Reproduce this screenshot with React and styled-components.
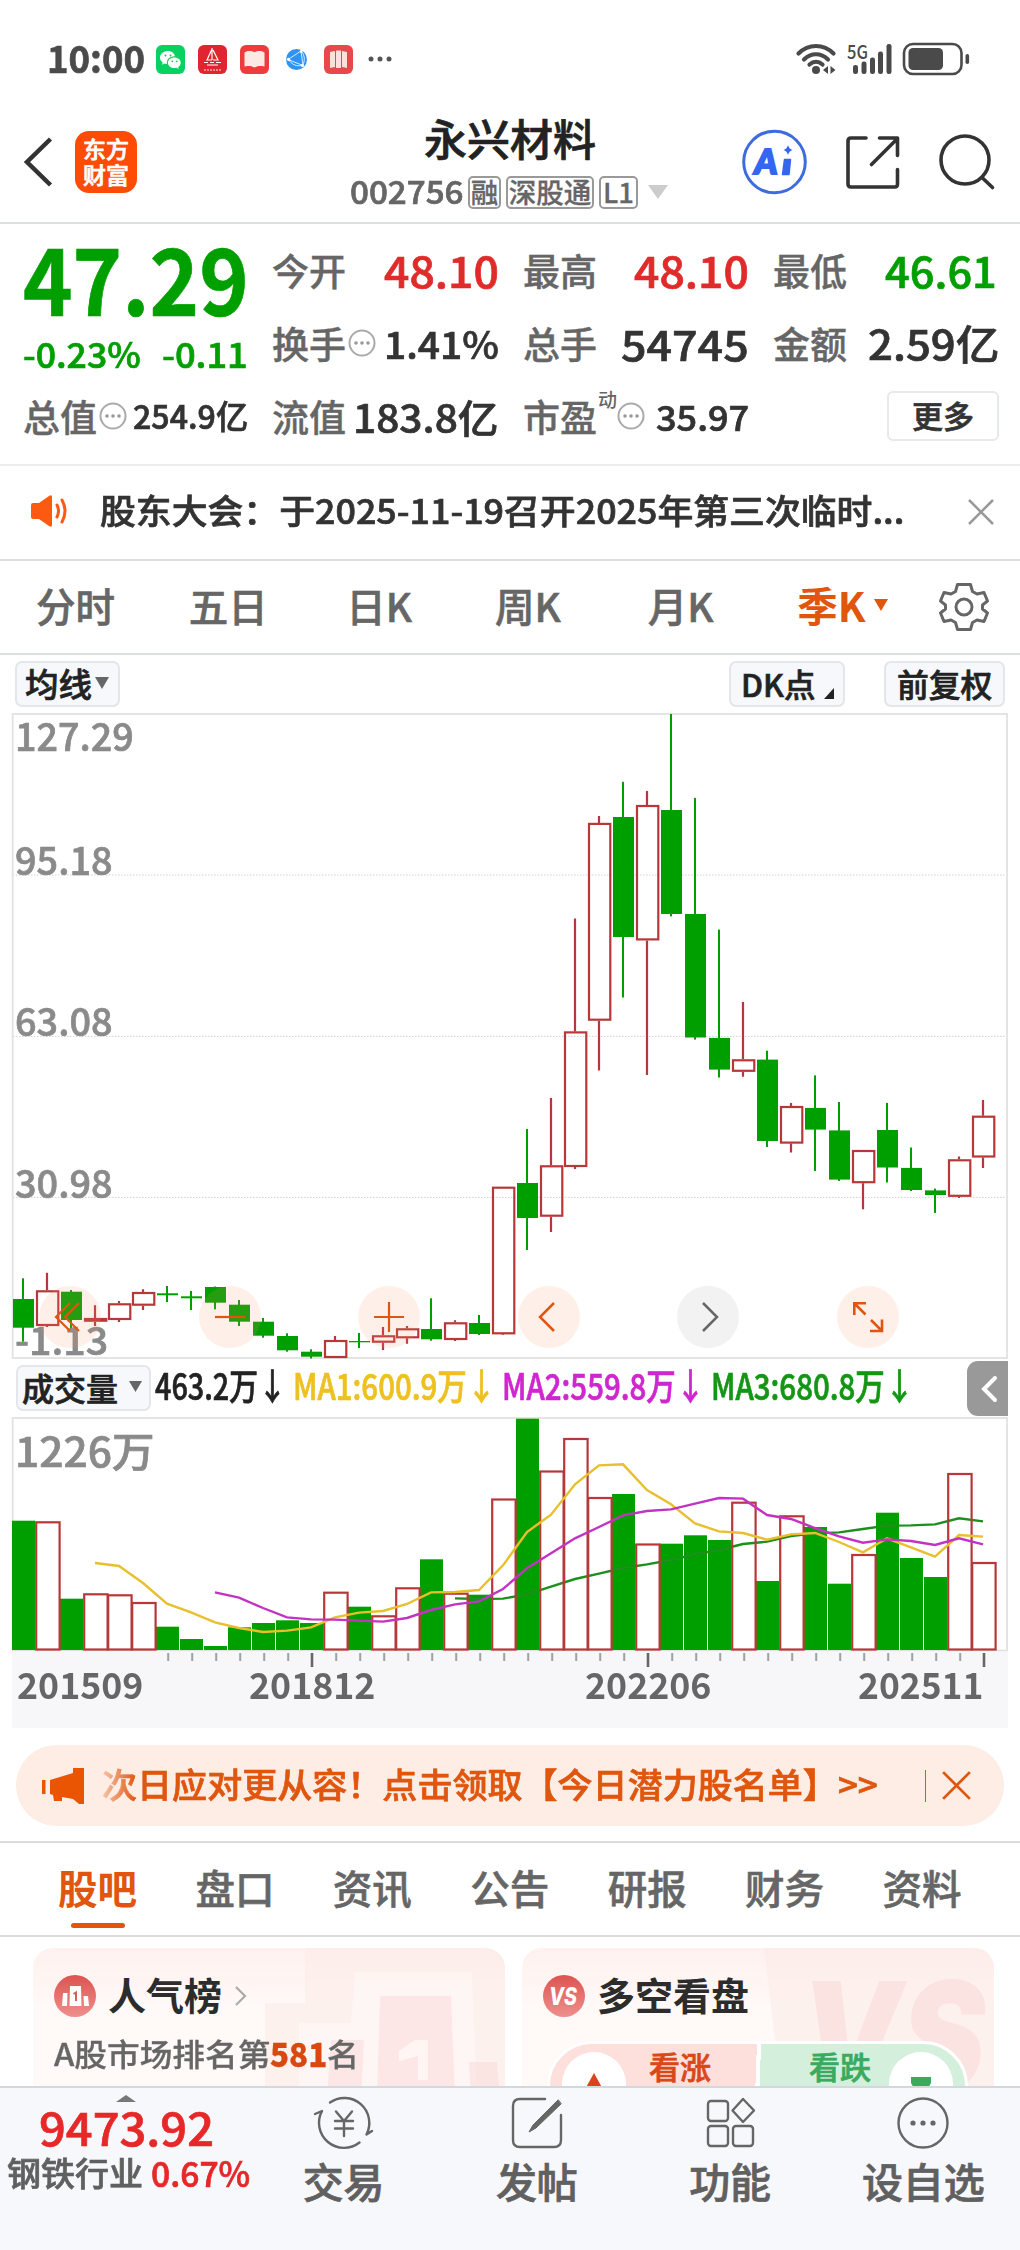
import React, { useLayoutEffect, useRef, useState } from "react";
import styled, { createGlobalStyle } from "styled-components";

const GREEN = "#009f00";
const RED = "#b8383a";
const ORANGE = "#e0560e";

const Global = createGlobalStyle`
  * { box-sizing: border-box; }
  body { margin: 0; background: #fff; }
  #root {
    font-family: "Noto Sans CJK SC", "Noto Sans", sans-serif;
    font-weight: 500;
    color: #333;
    -webkit-text-stroke: .7px currentColor;
  }
  svg { display: block; flex: none; overflow: visible; }
  svg text { -webkit-text-stroke: 0; }
`;

/* ---------- text that is stretched to a given width ---------- */
const FitBox = styled.span`
  display: block;
  flex: none;
  width: ${(p) => p.$w}px;
  height: ${(p) => p.$h || p.$s * 1.2}px;
  line-height: ${(p) => p.$h || p.$s * 1.2}px;
  font-size: ${(p) => p.$s}px;
  color: ${(p) => p.$c || "inherit"};
  font-weight: ${(p) => p.$b || "inherit"};
  white-space: nowrap;
  margin: ${(p) => p.$m || 0};
`;
const FitInner = styled.span`
  display: inline-block;
  transform-origin: 0 50%;
`;
function Fit({ w, s, h, c, b, m, children }) {
  const ref = useRef(null);
  const [k, setK] = useState(1);
  useLayoutEffect(() => {
    const n = ref.current.offsetWidth;
    if (n) setK(w / n);
  }, [w, children]);
  return (
    <FitBox $w={w} $s={s} $h={h} $c={c} $b={b} $m={m}>
      <FitInner ref={ref} style={{ transform: `scaleX(${k})` }}>{children}</FitInner>
    </FitBox>
  );
}

const Screen = styled.div`
  width: 1020px;
  height: 2250px;
  overflow: hidden;
  display: flex;
  flex-direction: column;
  background: #fff;
`;

/* ---------- status bar ---------- */
const StatusBar = styled.div`
  height: 90px;
  flex: none;
  padding: 28px 50px 0 47px;
  display: flex;
  justify-content: space-between;
`;
const StatusSide = styled.div`
  display: flex;
  align-items: center;
  height: 62px;
`;
const AppIcons = styled.div`
  display: flex;
  gap: 13px;
  margin-left: 11px;
  align-items: center;
`;

/* ---------- header ---------- */
const Header = styled.header`
  height: 134px;
  flex: none;
  border-bottom: 2px solid #dcdfe0;
  display: grid;
  grid-template-columns: 350px 320px 350px;
`;
const HeaderLeft = styled.div`
  display: flex;
  align-items: center;
  padding: 12px 0 0 23px;
  gap: 22px;
`;
const Logo = styled.div`
  width: 62px;
  height: 62px;
  border-radius: 14px;
  background: #fe4b06;
  color: #fff;
  display: flex;
  flex-direction: column;
  justify-content: center;
  align-items: center;
  font-size: 23px;
  line-height: 26px;
  padding-bottom: 3px;
  font-weight: 500;
`;
const HeaderMid = styled.div`
  display: flex;
  flex-direction: column;
`;
const Title = styled.div`
  font-size: 43px;
  line-height: 50px;
  margin-top: 22px;
  padding-left: 74px;
  font-weight: 500;
  color: #222;
`;
const CodeRow = styled.div`
  display: flex;
  align-items: center;
  height: 34px;
  margin-top: 13px;
  color: #666;
`;
const Tag = styled.span`
  width: ${(p) => p.$w}px;
  height: 33px;
  margin-left: 5px;
  border: 2px solid #999;
  border-radius: 5px;
  display: flex;
  align-items: center;
  justify-content: center;
  font-size: 27.5px;
  line-height: 28px;
  padding-bottom: 3px;
  white-space: nowrap;
  -webkit-text-stroke: .3px currentColor;
`;
const HeaderRight = styled.div`
  display: flex;
  align-items: center;
  padding: 12px 0 0 72px;
`;

/* ---------- quote ---------- */
const Quote = styled.section`
  height: 242px;
  flex: none;
  border-bottom: 2px solid #eceeee;
  padding: 10px 22px 0 23px;
  display: grid;
  grid-template-columns: 225px 227px 226px 226px;
  column-gap: 24px;
  grid-template-rows: 72px 74px 72px;
`;
const Price = styled.div`
  grid-row: span 2;
  display: flex;
  flex-direction: column;
`;
const Changes = styled.div`
  display: flex;
  justify-content: space-between;
  margin-top: 14px;
`;
const Cell = styled.div`
  display: flex;
  align-items: center;
  justify-content: space-between;
  padding-right: ${(p) => p.$r || 0}px;
`;
const Label = styled.span`
  display: flex;
  align-items: center;
  gap: 2px;
  font-size: 37px;
  line-height: 44px;
  color: #666;
  white-space: nowrap;
  -webkit-text-stroke: .4px currentColor;
`;
const Sup = styled.sup`
  font-size: 19px;
  line-height: 20px;
  align-self: flex-start;
  margin: -5px -2px 0 -1px;
  -webkit-text-stroke: 0;
`;
const MoreButton = styled.button`
  width: 112px;
  height: 50px;
  margin-left: auto;
  padding: 0 0 3px;
  background: #fff;
  border: 2px solid #e6e9ea;
  border-radius: 6px;
  font: inherit;
  font-size: 31px;
  line-height: 44px;
  color: #333;
`;

/* ---------- notice ---------- */
const Notice = styled.section`
  height: 95px;
  flex: none;
  border-bottom: 2px solid #dcdfe0;
  padding: 0 26px 2px 29px;
  display: flex;
  align-items: center;
  justify-content: space-between;
`;
const NoticeText = styled.div`
  display: flex;
  align-items: center;
  gap: 29px;
`;

/* ---------- period tabs ---------- */
const Periods = styled.nav`
  height: 94px;
  flex: none;
  border-bottom: 2px solid #dcdfe0;
  padding: 0 31px 0 36px;
  display: flex;
  align-items: center;
  color: #666;
`;
const Period = styled.span`
  width: ${(p) => p.$w}px;
  display: flex;
  align-items: center;
  gap: 8px;
  font-size: ${(p) => (p.$on ? 40.5 : 39.5)}px;
  line-height: 46px;
  padding-bottom: 4px;
  color: ${(p) => (p.$on ? ORANGE : "inherit")};
  font-weight: ${(p) => (p.$on ? 700 : 500)};
  -webkit-text-stroke: ${(p) => (p.$on ? 0 : 0.6)}px currentColor;
`;

/* ---------- chart ---------- */
const ToolRow = styled.div`
  height: 58px;
  flex: none;
  padding: 6px 15px 0 15px;
  display: flex;
  gap: 39px;
`;
const Chip = styled.button`
  width: ${(p) => p.$w}px;
  height: 46px;
  padding: 0 0 3px ${(p) => p.$l}px;
  background: #f7f8fb;
  border: 2px solid #e3e6ea;
  border-radius: 7px;
  display: flex;
  align-items: center;
  font: inherit;
  font-size: ${(p) => p.$s}px;
  line-height: 40px;
  color: #222;
  margin-right: ${(p) => (p.$push ? "auto" : 0)};
  white-space: nowrap;
  flex: none;
`;
const Plot = styled.div`
  flex: none;
  position: relative;
  height: ${(p) => p.$h}px;
`;
const AxisLabels = styled.div`
  position: absolute;
  left: 15px;
  top: 0;
  height: 100%;
  color: #8a8a8a;
`;
const AxisLabel = styled.div`
  position: absolute;
  top: ${(p) => p.$y}px;
`;
const Controls = styled.div`
  position: absolute;
  left: 39px;
  bottom: 11px;
  display: flex;
  gap: 97.6px;
`;
const Round = styled.button`
  width: 62px;
  height: 62px;
  border: 0;
  padding: 0;
  border-radius: 50%;
  background: ${(p) => (p.$gray ? "rgba(200,200,200,.23)" : "rgba(255,150,110,.15)")};
  display: flex;
  align-items: center;
  justify-content: center;
`;
const VolHead = styled.div`
  height: 58px;
  flex: none;
  padding: 6px 12px 0 16px;
  display: flex;
  align-items: flex-start;
`;
const Collapse = styled.button`
  width: 41px;
  height: 55px;
  border: 0;
  margin: -4px 0 0 auto;
  padding: 0 0 0 2px;
  border-radius: 11px 0 0 11px;
  background: #999;
  display: flex;
  align-items: center;
  justify-content: center;
`;
const Axis = styled.div`
  height: 76px;
  flex: none;
  margin: 0 12px;
  background: #f7f7fa;
`;
const Dates = styled.div`
  display: flex;
  padding-left: 5px;
  color: #666;
  -webkit-text-stroke: 0;
`;

/* ---------- banner ---------- */
const Banner = styled.div`
  height: 81px;
  flex: none;
  margin: 17px 16px 15px;
  border-radius: 41px;
  background: #fdede4;
  display: flex;
  align-items: center;
  padding: 0 33px 0 26px;
`;
const BannerText = styled.div`
  margin-left: 18px;
  -webkit-mask-image: linear-gradient(90deg, rgba(0,0,0,.25), #000 34px);
  mask-image: linear-gradient(90deg, rgba(0,0,0,.25), #000 34px);
`;
const Bar = styled.i`
  width: 1px;
  height: 32px;
  background: ${ORANGE};
  margin: 0 16px 0 auto;
`;

/* ---------- content tabs ---------- */
const Tabs = styled.nav`
  height: 96px;
  flex: none;
  border-top: 2px solid #dcdcdc;
  border-bottom: 2px solid #d9dddd;
  padding: 16px 0 0 58px;
  display: flex;
`;
const Tab = styled.div`
  width: 137.6px;
  font-size: 39.5px;
  line-height: 56px;
  color: ${(p) => (p.$on ? ORANGE : "#666")};
  font-weight: ${(p) => (p.$on ? 700 : 500)};
  -webkit-text-stroke: ${(p) => (p.$on ? 0 : 0.6)}px currentColor;
  &::after {
    content: "";
    display: block;
    width: 54px;
    height: 5px;
    margin: 8px 0 0 13px;
    border-radius: 3px;
    background: ${(p) => (p.$on ? ORANGE : "transparent")};
  }
`;

/* ---------- cards ---------- */
const Cards = styled.section`
  height: 149px;
  flex: none;
  overflow: hidden;
  padding: 11px 26px 0 33px;
  display: flex;
  gap: 17px;
`;
const Card = styled.article`
  width: 472px;
  height: 220px;
  flex: none;
  border-radius: 20px;
  background: linear-gradient(#fef1ef, #fff9f7 60px);
  position: relative;
  overflow: hidden;
  padding: 27px 0 0 21px;
`;
const CardArt = styled.div`
  position: absolute;
  right: 0;
  top: 0;
`;
const CardHead = styled.div`
  position: relative;
  display: flex;
  align-items: center;
  height: 42px;
  font-size: 38px;
  line-height: 42px;
  font-weight: 700;
  color: #2c2c2c;
  gap: 12px;
  -webkit-text-stroke: 0;
  & > span { margin-top: -5px; }
`;
const Rank = styled.p`
  position: relative;
  margin: 17px 0 0;
  display: flex;
  color: #666;
  -webkit-text-stroke: .3px currentColor;
`;
const Vote = styled.div`
  position: relative;
  display: flex;
  width: 421px;
  height: 90px;
  margin: 24px 0 0 4px;
  border: 3px solid #fff;
  border-radius: 45px;
  overflow: hidden;
  background: linear-gradient(92deg, #fddfdb 0 49.5%, #fff 49.5% 50.5%, #d5efdd 50.5%);
  justify-content: space-between;
  padding: 8px 12px;
  font-size: 31px;
  line-height: 36px;
`;
const VoteSide = styled.div`
  display: flex;
  gap: ${(p) => p.$g}px;
  color: ${(p) => p.$c};
  & > span { margin-top: -4px; }
`;
const Disc = styled.i`
  width: 64px;
  height: 64px;
  border-radius: 50%;
  background: #fff;
  display: flex;
  justify-content: center;
  padding-top: 21px;
`;

/* ---------- bottom bar ---------- */
const Bottom = styled.footer`
  flex: 1;
  border-top: 2px solid #d3d8da;
  background: #f7f8fb;
  display: flex;
`;
const Index = styled.div`
  width: 247px;
  display: flex;
  flex-direction: column;
  align-items: center;
  padding: 7px 0 0 5px;
`;
const IndexRow = styled.div`
  display: flex;
  gap: 8px;
  margin-left: 4px;
`;
const Action = styled.div`
  width: 193.3px;
  display: flex;
  flex-direction: column;
  align-items: center;
  padding-top: 8px;
  font-size: 41px;
  line-height: 50px;
  color: #606060;
  & > span { margin-top: 5px; }
`;

const Tri = ({ w, h, c, up }) => (
  <svg width={w} height={h}><path d={up ? `M0 ${h}H${w}L${w / 2} 0z` : `M0 0H${w}L${w / 2} ${h}z`} fill={c} /></svg>
);
const Cross = ({ s, c, w = 2.5 }) => (
  <svg width={s} height={s} viewBox="0 0 26 26"><path d="M1 1L25 25M25 1L1 25" stroke={c} strokeWidth={w} /></svg>
);
const Info = () => (
  <svg width="28" height="28" viewBox="0 0 28 28">
    <circle cx="14" cy="14" r="12.5" fill="none" stroke="#aaa" strokeWidth="2" />
    <circle cx="8" cy="14" r="1.8" fill="#999" /><circle cx="14" cy="14" r="1.8" fill="#999" /><circle cx="20" cy="14" r="1.8" fill="#999" />
  </svg>
);

/* candles: [direction, body top, body bottom, high, low] */
const candles = [
  ["g", 1299, 1327.7, 1278.3, 1341.7], ["r", 1290.3, 1326, 1272.7, 1327], ["g", 1291.7, 1320, 1290, 1330.7],
  ["r", 1318, 1321.7, 1305.3, 1326], ["r", 1303.3, 1320, 1301, 1322], ["r", 1292, 1305.7, 1289.3, 1310],
  ["g", 1293.3, 1295.3, 1286, 1302], ["g", 1296.3, 1298.3, 1291, 1310], ["g", 1287, 1302.7, 1286.5, 1309.3],
  ["g", 1304.7, 1321.7, 1300, 1326], ["g", 1321.7, 1335.7, 1318, 1337.7], ["g", 1336, 1350.3, 1333.3, 1351.7],
  ["g", 1351.7, 1356.7, 1349.3, 1358.5], ["r", 1340, 1358, 1336, 1358], ["g", 1341, 1342.3, 1333, 1348],
  ["r", 1335.3, 1342.7, 1327, 1350], ["r", 1328.3, 1338.3, 1326, 1343.7], ["g", 1329, 1339.3, 1298.3, 1340.7],
  ["r", 1322.3, 1340, 1320.3, 1341], ["g", 1323, 1334, 1315, 1335], ["r", 1186.7, 1334.3, 1186.7, 1335],
  ["g", 1183, 1218, 1129, 1250], ["r", 1165.3, 1216.7, 1098, 1232], ["r", 1031.4, 1167, 918.6, 1169],
  ["r", 822.9, 1020.7, 816, 1070.4], ["g", 817, 937, 781.8, 997.5], ["r", 805, 940.4, 791, 1075],
  ["g", 810, 914, 714, 916.4], ["g", 914, 1037.5, 797.9, 1039.6], ["g", 1037.9, 1069.6, 929.6, 1077.5],
  ["r", 1059.3, 1071.8, 1002, 1076.8], ["g", 1059.6, 1141, 1050.7, 1147], ["r", 1106, 1143.6, 1102.9, 1152.5],
  ["g", 1107.9, 1129.6, 1075.4, 1171], ["g", 1130.4, 1179.6, 1102, 1181], ["r", 1150, 1183.2, 1150, 1209.3],
  ["g", 1130, 1167.5, 1102.9, 1182.5], ["g", 1167.9, 1190, 1147.5, 1191], ["g", 1190.4, 1195, 1188.6, 1212.9],
  ["r", 1159.3, 1196.8, 1156.4, 1198], ["r", 1115.7, 1157.5, 1100, 1167.9],
];
const volumeTops = [
  120.7, 121.3, 198.7, 193.3, 194.3, 202, 226.7, 239, 246, 227.3, 223, 220.3, 223, 191.7, 206.7, 215.3, 187.3, 159.3,
  192.7, 194.7, 98.5, 18.7, 70.5, 38, 97, 94, 143.5, 143.7, 135.3, 140, 101.7, 181, 115.3, 127, 183.7, 154, 112.7,
  158, 177, 73, 162,
];
const ma1 = [489, 498, 549, 611, 637, 667, 684, 696, 692, 682, 652, 638, 633, 612, 577, 576, 570, 496, 396, 344, 253,
  196, 193, 270, 313, 370, 394, 399, 419, 403, 399, 426, 457, 415, 442, 470, 405, 410];
const ma2 = [577, 593, 624, 652, 658, 659, 662, 665, 654, 630, 613, 604, 567, 505, 460, 415, 381, 346, 333, 328, 311,
  294, 296, 345, 357, 384, 409, 428, 418, 423, 435, 415, 433];
const ma3 = [595, 597, 596, 583, 560, 537, 521, 504, 493, 480, 463, 450, 432, 425, 408, 400, 397, 387, 377, 376, 373,
  355, 364];
const cx = (i) => 23 + 24 * i;
const line = (arr, from) => arr.map((v, k) => `${cx(from + k)},${v / 3}`).join(" ");

function CandleChart() {
  return (
    <svg width="1020" height="646" viewBox="0 713 1020 646">
      {[875, 1036.4, 1197.4].map((y) => (
        <path key={y} d={`M13 ${y}H1006`} stroke="#d2d2d2" strokeWidth="1" strokeDasharray="1.5 1.5" />
      ))}
      <rect x="12.7" y="714" width="994.3" height="644" fill="none" stroke="#e2e2e2" strokeWidth="1.8" />
      {candles.map(([d, t, b, h, l], i) => {
        const x = cx(i);
        return d === "g" ? (
          <g key={i} fill={GREEN}>
            <rect x={x - 1} y={h} width="2" height={l - h} />
            <rect x={x - 10} y={t} width="21" height={b - t} />
          </g>
        ) : (
          <g key={i} stroke={RED} strokeWidth="2.2" fill="none">
            <path d={`M${x} ${h}V${t}M${x} ${b}V${l}`} />
            <rect x={x - 10} y={t + 1} width="21.3" height={Math.max(b - t - 2, 1)} />
          </g>
        );
      })}
    </svg>
  );
}

function VolumeChart() {
  return (
    <svg width="1020" height="235" viewBox="0 17 1020 235">
      <rect x="12.7" y="18" width="994.3" height="232.5" fill="none" stroke="#e2e2e2" strokeWidth="1.8" />
      {volumeTops.map((t, i) =>
        candles[i][0] === "g" ? (
          <rect key={i} x={cx(i) - 11} y={t} width="23" height={250 - t} fill={GREEN} />
        ) : null
      )}
      <polyline points={line(ma3, 18)} fill="none" stroke="#1c8f1c" strokeWidth="2.4" />
      {volumeTops.map((t, i) =>
        candles[i][0] === "g" ? null : (
          <rect key={i} x={cx(i) - 10.8} y={t + 1} width="23.4" height={249 - t - 0.5} fill="none" stroke={RED} strokeWidth="2.2" />
        )
      )}
      <polyline points={line(ma1, 3)} fill="none" stroke="#e8c02c" strokeWidth="2.4" />
      <polyline points={line(ma2, 8)} fill="none" stroke="#c233c2" strokeWidth="2.4" />
    </svg>
  );
}

function Ticks() {
  return (
    <svg width="996" height="16" viewBox="0 -1 996 16">
      {candles.map((_, i) => {
        const big = i === 12 || i === 26 || i === 40;
        if (i < 6) return null;
        return <rect key={i} x={cx(i) - 11.8 + (big ? -0.5 : 0)} y="0" width={big ? 2.6 : 2} height={big ? 14 : 8} fill={big ? "#666" : "#a0a0a0"} />;
      })}
    </svg>
  );
}

const actionIcon = { fill: "none", stroke: "#666", strokeWidth: 2.4, strokeLinecap: "round", strokeLinejoin: "round" };

export default function App() {
  return (
    <Screen>
      <Global />
      <StatusBar>
        <StatusSide>
          <Fit w={98} s={38} b={700} c="#4a4a4a" m="-4px 0 0">10:00</Fit>
          <AppIcons>
            <svg width="29" height="29" viewBox="0 0 29 29">
              <rect width="29" height="29" rx="6" fill="#07d160" />
              <path d="M12 6c-4.600 0-8 3-8 6.600 0 2 1 3.700 2.700 4.900l-.7 2.300 2.700-1.400 2.300.5c-.8-5 3.500-7.800 8-7.600C18.300 8.200 15.600 6 12 6z" fill="#fff" />
              <path d="M18.500 12.500c-3.800 0-6.600 2.400-6.600 5.300s2.900 5.300 6.600 5.300l2-.3 2.200 1.200-.6-1.900c1.700-1 2.600-2.500 2.600-4.300 0-2.900-2.600-5.300-6.200-5.300z" fill="#fff" />
              <g fill="#07d160"><circle cx="9.500" cy="10.500" r="1" /><circle cx="14.500" cy="10.500" r="1" /><circle cx="16.300" cy="16.300" r=".9" /><circle cx="20.700" cy="16.300" r=".9" /></g>
            </svg>
            <svg width="29" height="29" viewBox="0 0 29 29">
              <rect width="29" height="29" rx="6" fill="#e02430" />
              <path d="M14 3v12M14 4L9 15h5M15 5l5 10h-5M6 17.500h4m2 0h4m2 0h5M9 20h11" fill="none" stroke="#fff" strokeWidth="1.200" />
              <path d="M6 25h17" stroke="#f7a4a8" strokeWidth="1.600" strokeDasharray="2 1" />
            </svg>
            <svg width="29" height="29" viewBox="0 0 29 29">
              <rect width="29" height="29" rx="6" fill="#ee3b3b" />
              <path d="M4.500 7.500l3-1.500c3-.3 5 0 7 1.200 2-1.200 4-1.500 7-1.200l3 1.500v14l-3-.5c-3-.3-5 .3-7 1.500-2-1.200-4-1.800-7-1.500l-3 .5z" fill="#fde9e4" />
            </svg>
            <svg width="29" height="29" viewBox="0 0 29 29">
              <circle cx="14.500" cy="14.500" r="10.500" fill="#2f93f5" />
              <path d="M6 14.500L19 6l2 14.500zM6 14c4 6 9 8 15 6M19 5c4 6 4 10 2 15" fill="none" stroke="#d6ecff" strokeWidth="1" />
              <circle cx="6.500" cy="14.300" r="1.600" fill="#fff" /><circle cx="19" cy="6.500" r="1.300" fill="#fff" /><circle cx="20.500" cy="20.500" r="1.600" fill="#fff" />
            </svg>
            <svg width="29" height="29" viewBox="0 0 29 29">
              <rect width="29" height="29" rx="6" fill="#e8474c" />
              <path d="M6 7l5-1v16l-5 1zM12 5.500h5v17.500h-5zM18 6L23 7v16l-5-1z" fill="#fbe0dd" />
            </svg>
          </AppIcons>
          <svg width="36" height="8" viewBox="-3 0 36 8"><g fill="#555"><circle cx="15" cy="4" r="2.500" /><circle cx="24" cy="4" r="2.500" /><circle cx="33" cy="4" r="2.500" /></g></svg>
        </StatusSide>
        <StatusSide>
          <svg width="174" height="36" viewBox="796 41 174 36">
            <g fill="none" stroke="#4a4a4a" strokeWidth="4.2" strokeLinecap="round">
              <path d="M798.500 53.500c10-10 25-10 35 0" />
              <path d="M804 59.500c7-7 17-7 24 0" />
              <path d="M809.500 64.500c4-3.500 9-3.500 13 0" />
            </g>
            <circle cx="816" cy="70" r="4" fill="#4a4a4a" />
            <path d="M828 66v8l-5-4zM830.500 66v8l5-4z" fill="#4a4a4a" />
            <text x="847" y="58.500" fontSize="19" fontWeight="500" fill="#4a4a4a" textLength="21" lengthAdjust="spacingAndGlyphs">5G</text>
            <g fill="#4a4a4a">
              <rect x="853" y="65" width="5" height="9" rx="2.200" /><rect x="861.500" y="61.500" width="5" height="12.500" rx="2.200" />
              <rect x="870" y="57.500" width="5" height="16.500" rx="2.200" /><rect x="878" y="51.500" width="5" height="22.500" rx="2.200" />
              <rect x="886.500" y="44" width="5" height="30" rx="2.200" />
            </g>
            <rect x="904" y="44" width="57.500" height="30" rx="9" fill="none" stroke="#4a4a4a" strokeWidth="2.600" />
            <rect x="908.500" y="48" width="34.500" height="22" rx="4.500" fill="#4a4a4a" />
            <rect x="965.500" y="54" width="3.600" height="10" rx="1.800" fill="#4a4a4a" />
          </svg>
        </StatusSide>
      </StatusBar>

      <Header>
        <HeaderLeft>
          <svg width="30" height="52" viewBox="0 0 30 52"><path d="M27.500 3L4 26l23.500 23" fill="none" stroke="#333" strokeWidth="4.500" /></svg>
          <Logo><span>东方</span><span>财富</span></Logo>
        </HeaderLeft>
        <HeaderMid>
          <Title>永兴材料</Title>
          <CodeRow>
            <Fit w={113} s={32} m="-4px 0 0">002756</Fit>
            <Tag $w={33}>融</Tag><Tag $w={88}>深股通</Tag><Tag $w={39}>L1</Tag>
            <svg width="32" height="14"><path d="M10 0H30L20 14z" fill="#ccc" /></svg>
          </CodeRow>
        </HeaderMid>
        <HeaderRight>
          <svg width="256" height="66" viewBox="742 129 256 66">
            <circle cx="774.500" cy="162" r="30.800" fill="none" stroke="#3d6cdf" strokeWidth="3" />
            <text x="754.500" y="173.500" fontSize="35" fontWeight="900" fontStyle="italic" fill="#3566f2" fontFamily="Lato, Inter, sans-serif" stroke="#3566f2" strokeWidth="2">A</text>
            <path d="M784.500 159.500h6l-1.500 15h-6.500z" fill="#3566f2" stroke="#3566f2" strokeWidth="1.500" strokeLinejoin="round" />
            <path d="M788 145q1 4 4.500 5q-3.500 1-4.500 5q-1-4-4.500-5q3.500-1 4.500-5z" fill="#3566f2" />
            <g fill="none" stroke="#333" strokeWidth="3.600" strokeLinecap="round" strokeLinejoin="round">
              <path d="M866 138H851q-3 0-3 3V184q0 3 3 3H895q2.500 0 2.500-3V169.500" />
              <path d="M879.500 138H897.500V155.500M897 139L871.500 164.500" />
              <circle cx="965" cy="160" r="24" /><path d="M982 177.500L992.500 187.500" />
            </g>
          </svg>
        </HeaderRight>
      </Header>

      <Quote>
        <Price>
          <Fit w={226} s={93} h={84} c={GREEN} b={700}>47.29</Fit>
          <Changes>
            <Fit w={118} s={35} c={GREEN}>-0.23%</Fit>
            <Fit w={86} s={35} c={GREEN}>-0.11</Fit>
          </Changes>
        </Price>
        <Cell><Label>今开</Label><Fit w={115} s={43} c="#e02b2b">48.10</Fit></Cell>
        <Cell><Label>最高</Label><Fit w={115} s={43} c="#e02b2b">48.10</Fit></Cell>
        <Cell $r={2}><Label>最低</Label><Fit w={112} s={43} c={GREEN}>46.61</Fit></Cell>
        <Cell><Label>换手<Info /></Label><Fit w={115} s={38}>1.41%</Fit></Cell>
        <Cell><Label>总手</Label><Fit w={128} s={42}>54745</Fit></Cell>
        <Cell><Label>金额</Label><Fit w={131} s={41}>2.59亿</Fit></Cell>
        <Cell><Label>总值<Info /></Label><Fit w={115} s={33}>254.9亿</Fit></Cell>
        <Cell><Label>流值</Label><Fit w={146} s={39}>183.8亿</Fit></Cell>
        <Cell><Label>市盈<Sup>动</Sup><Info /></Label><Fit w={93} s={35}>35.97</Fit></Cell>
        <Cell><MoreButton>更多</MoreButton></Cell>
      </Quote>

      <Notice>
        <NoticeText>
          <svg width="42" height="34" viewBox="0 0 42 34">
            <path d="M2 11q0-2 2-2h6L20 2q3-2 3 1v28q0 3-3 1L10 25H4q-2 0-2-2z" fill="#fb5a10" />
            <path d="M28 11q3 6 0 12M33 6q6 11 0 22" fill="none" stroke="#fb5a10" strokeWidth="3" strokeLinecap="round" />
          </svg>
          <Fit w={804} s={34.5} m="-4px 0 0">股东大会：于2025-11-19召开2025年第三次临时...</Fit>
        </NoticeText>
        <Cross s={26} c="#999" />
      </Notice>

      <Periods>
        <Period $w={153}>分时</Period><Period $w={158}>五日</Period><Period $w={149}>日K</Period>
        <Period $w={153}>周K</Period><Period $w={150}>月K</Period>
        <Period $w={142} $on>季K<Tri w={14} h={12} c={ORANGE} /></Period>
        <svg width="50" height="50" viewBox="-25 -25 50 50" fill="none" stroke="#666" strokeWidth="3">
          <path d="M-6.500 -22.500H6.500L8.500 -15.500L13 -13L20 -14.500L23.500 -6L18.500 -2V2L23.500 6L20 14.500L13 13L8.500 15.500L6.500 22.500H-6.500L-8.500 15.500L-13 13L-20 14.500L-23.500 6L-18.500 2V-2L-23.500 -6L-20 -14.500L-13 -13L-8.500 -15.500z" strokeLinejoin="round" />
          <circle r="8" />
        </svg>
      </Periods>

      <ToolRow>
        <Chip $w={105} $l={8} $s={33.5} $push>均线<svg width="20" height="12"><path d="M3 0H17L10 12z" fill="#666" /></svg></Chip>
        <Chip $w={116} $l={10} $s={31.5}>DK点<svg width="20" height="32"><path d="M19 21V32H9z" fill="#222" /></svg></Chip>
        <Chip $w={121} $l={11} $s={31.8}>前复权</Chip>
      </ToolRow>

      <Plot $h={646}>
        <CandleChart />
        <AxisLabels>
          <AxisLabel $y={-2}><Fit w={119} s={39}>127.29</Fit></AxisLabel>
          <AxisLabel $y={122}><Fit w={98} s={39}>95.18</Fit></AxisLabel>
          <AxisLabel $y={283}><Fit w={98} s={39}>63.08</Fit></AxisLabel>
          <AxisLabel $y={445}><Fit w={98} s={39}>30.98</Fit></AxisLabel>
          <AxisLabel $y={602}><Fit w={93} s={39}>-1.13</Fit></AxisLabel>
        </AxisLabels>
        <Controls>
          <Round><svg width="62" height="62" fill="none" stroke={ORANGE} strokeWidth="2.200"><path d="M31 17L17 31L31 45M40 17L26 31L40 45" /></svg></Round>
          <Round><svg width="62" height="62" stroke={ORANGE} strokeWidth="2.200"><path d="M16 31H46" /></svg></Round>
          <Round><svg width="62" height="62" stroke={ORANGE} strokeWidth="2.200"><path d="M16 31H46M31 16V46" /></svg></Round>
          <Round><svg width="62" height="62" fill="none" stroke={ORANGE} strokeWidth="2.500"><path d="M36 17L22 31L36 45" /></svg></Round>
          <Round $gray><svg width="62" height="62" fill="none" stroke="#666" strokeWidth="2.500"><path d="M26 17L40 31L26 45" /></svg></Round>
          <Round><svg width="62" height="62" fill="none" stroke={ORANGE} strokeWidth="2.600"><path d="M29 17.300H17.300V29M17.500 17.500L28.500 28.500M33 45H45V33.500M45 45L34 34" /></svg></Round>
        </Controls>
      </Plot>

      <VolHead>
        <Chip $w={135} $l={4} $s={32}>成交量<svg width="26" height="11"><path d="M11 0H24L17.500 11z" fill="#666" /></svg></Chip>
        <Fit w={132} s={36} c="#222" m="-2px 0 0 4px">463.2万↓</Fit>
        <Fit w={203} s={36} c="#eec020" m="-2px 0 0 6px">MA1:600.9万↓</Fit>
        <Fit w={203} s={36} c="#cf26cf" m="-2px 0 0 6px">MA2:559.8万↓</Fit>
        <Fit w={203} s={36} c="#149614" m="-2px 0 0 6px">MA3:680.8万↓</Fit>
        <Collapse><svg width="18" height="28"><path d="M15 3L4 14L15 25" fill="none" stroke="#fff" strokeWidth="4" strokeLinecap="round" /></svg></Collapse>
      </VolHead>
      <Plot $h={235}>
        <VolumeChart />
        <AxisLabels><AxisLabel $y={8}><Fit w={139} s={41}>1226万</Fit></AxisLabel></AxisLabels>
      </Plot>
      <Axis>
        <Ticks />
        <Dates>
          <Fit w={126} s={36} m="-6px 106px 0 0" b={700}>201509</Fit>
          <Fit w={126} s={36} m="-6px 210px 0 0" b={700}>201812</Fit>
          <Fit w={126} s={36} m="-6px 147px 0 0" b={700}>202206</Fit>
          <Fit w={125} s={36} m="-6px 0 0 0" b={700}>202511</Fit>
        </Dates>
      </Axis>

      <Banner>
        <svg width="42" height="36" viewBox="0 0 42 36"><path d="M0 12H3.500V26H0zM8 12L31 5V0H42V36H37L31 31L20 29V33H12L11 27L8 26z" fill="#ea5504" /></svg>
        <BannerText><Fit w={776} s={34.5} c={ORANGE} m="-4px 0 0">次日应对更从容！点击领取【今日潜力股名单】&gt;&gt;</Fit></BannerText>
        <Bar />
        <Cross s={29} c={ORANGE} />
      </Banner>

      <Tabs>
        {["股吧", "盘口", "资讯", "公告", "研报", "财务", "资料"].map((t, i) => <Tab key={t} $on={i === 0}>{t}</Tab>)}
      </Tabs>

      <Cards>
        <Card>
          <CardArt>
            <svg width="240" height="150">
              <path d="M40 0H240V150H0V55H40z" fill="#fbe9e6" opacity=".5" />
              <path d="M34 150V75H86L90 24H207L212 150z" fill="#fff" opacity=".4" />
              <path d="M115 48H186L190 150H112zM66 92H99L96 150H62zM204 114H232L235 150H206z" fill="#f9dbd8" opacity=".55" />
              <path d="M134 103L150 92H163V132H153V108L134 113z" fill="#fff6f4" />
            </svg>
          </CardArt>
          <CardHead>
            <svg width="42" height="42" viewBox="0 0 42 42">
              <defs><linearGradient id="badge" x2="0" y2="1"><stop stopColor="#dc5450" /><stop offset="1" stopColor="#ee908d" /></linearGradient></defs>
              <circle cx="21" cy="21" r="21" fill="url(#badge)" />
              <path d="M9 18H13.500L13 31H8zM16 11H27L27.500 31H15.500zM29.500 21H34L35 31H30z" fill="#fff" />
              <path d="M19.500 19L22 17.500V26" fill="none" stroke="#dd5c58" strokeWidth="2" />
            </svg>
            <span>人气榜</span>
            <svg width="14" height="22"><path d="M2 2L11 11L2 20" fill="none" stroke="#aaa" strokeWidth="2.200" /></svg>
          </CardHead>
          <Rank><Fit w={216} s={31}>A股市场排名第</Fit><Fit w={57} s={33} b={900} c="#d9480f">581</Fit><Fit w={32} s={31}>名</Fit></Rank>
        </Card>
        <Card>
          <CardArt>
            <svg width="240" height="150">
              <path d="M10 0H240V150H28z" fill="#fbe9e6" opacity=".5" />
              <text x="46" y="142" fontSize="150" fontWeight="900" fontStyle="italic" fontFamily="Inter, sans-serif" fill="#f9dbd8" opacity=".6" textLength="185" lengthAdjust="spacingAndGlyphs">VS</text>
            </svg>
          </CardArt>
          <CardHead>
            <svg width="42" height="42" viewBox="0 0 42 42">
              <circle cx="21" cy="21" r="21" fill="url(#badge)" />
              <text x="6" y="30" fontSize="24" fontWeight="800" fontStyle="italic" fontFamily="Inter, sans-serif" fill="#fff" textLength="28" lengthAdjust="spacingAndGlyphs">VS</text>
            </svg>
            <span>多空看盘</span>
          </CardHead>
          <Vote>
            <VoteSide $c="#d9481a" $g={23}><Disc><Tri w={22} h={20} c="#d9441a" up /></Disc><span>看涨</span></VoteSide>
            <VoteSide $c="#3aab5e" $g={18}><span>看跌</span><Disc><svg width="20" height="30"><path d="M0 4H20V10L10 28L0 10z" fill="#3aab5e" /></svg></Disc></VoteSide>
          </Vote>
        </Card>
      </Cards>

      <Bottom>
        <Index>
          <Tri w={20} h={7} c="#777" up />
          <Fit w={175} s={46} c="#e62828" m="-3px 0 0">9473.92</Fit>
          <IndexRow><Fit w={136} s={33.5} c="#606060" m="-2px 0 0">钢铁行业</Fit><Fit w={99} s={35} c="#e62828" m="-3px 0 0">0.67%</Fit></IndexRow>
        </Index>
        <Action>
          <svg width="60" height="54" viewBox="-30 -27 60 54" {...actionIcon}>
            <path d="M-14 -20.500A25 25 0 0 1 22.500 11.500L28 8" /><path d="M15.500 19.500A25 25 0 0 1 -22 -12L-29 -9" />
            <path d="M-8 -11.500L0 -2L8 -11.500M0 -2V13M-9 -2H9M-9 5.500H9" />
          </svg>
          <span>交易</span>
        </Action>
        <Action>
          <svg width="54" height="54" viewBox="-27 -27 54 54" {...actionIcon}>
            <path d="M8 -24H-17Q-24 -24 -24 -17V17Q-24 24 -17 24H17Q24 24 24 17V-8" />
            <path d="M21 -23L-4 2L-8 9L-1 5L24 -19z" fill="#666" strokeWidth="1" />
          </svg>
          <span>发帖</span>
        </Action>
        <Action>
          <svg width="54" height="54" viewBox="-27 -27 54 54" {...actionIcon}>
            <rect x="-22" y="-22" width="20" height="20" rx="3" /><rect x="-22" y="3" width="20" height="20" rx="3" /><rect x="3" y="3" width="20" height="20" rx="3" />
            <path d="M13 -24L24 -12.500L13 -1L2.500 -12.500z" />
          </svg>
          <span>功能</span>
        </Action>
        <Action>
          <svg width="54" height="54" viewBox="-27 -27 54 54" {...actionIcon}>
            <circle r="24.500" /><g fill="#666" stroke="none"><circle cx="-10" r="2.600" /><circle r="2.600" /><circle cx="10" r="2.600" /></g>
          </svg>
          <span>设自选</span>
        </Action>
      </Bottom>
    </Screen>
  );
}
